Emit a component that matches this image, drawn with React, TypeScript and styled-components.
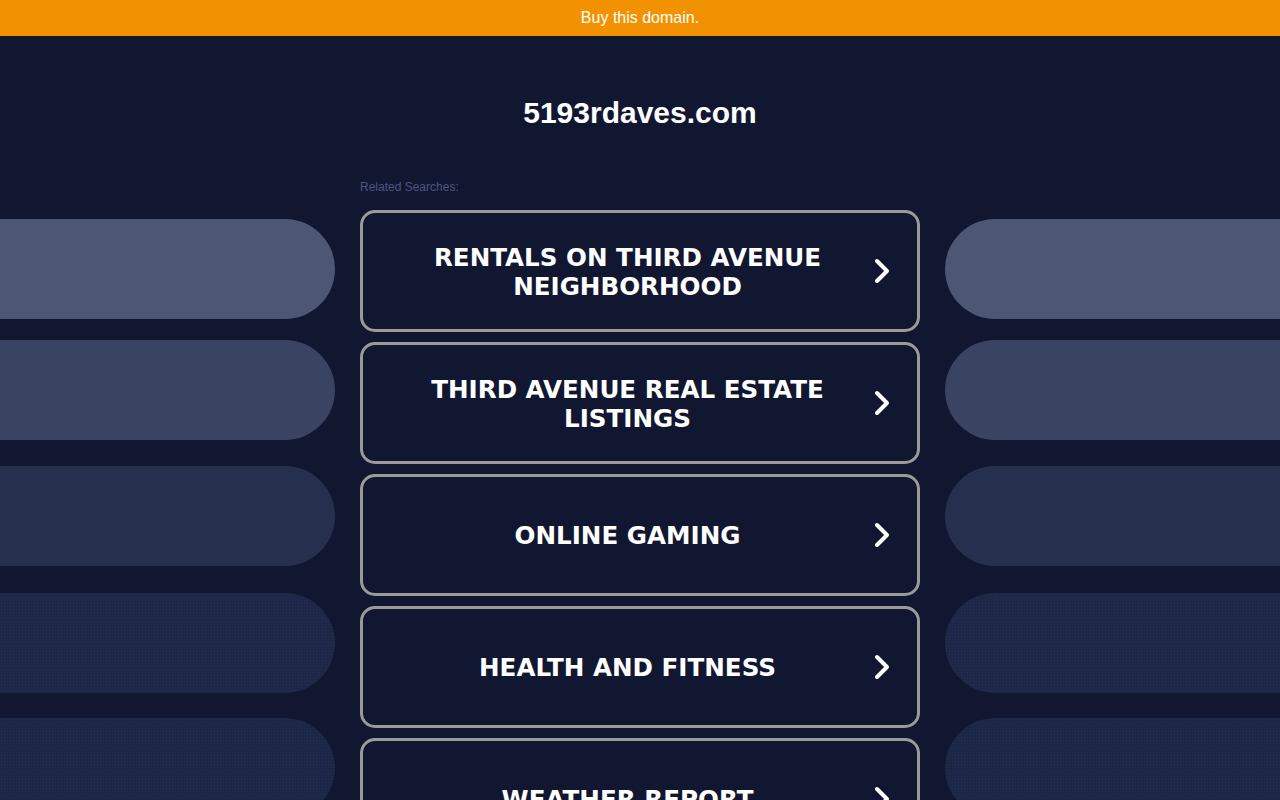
import React from 'react'
import styled, { createGlobalStyle, css } from 'styled-components'

const GlobalStyle = createGlobalStyle`
  html, body {
    margin: 0;
    padding: 0;
    background: #111730;
    overflow: hidden;
  }
  body {
    font-family: 'Liberation Sans', Arial, sans-serif;
  }
`

const searches = [
  'RENTALS ON THIRD AVENUE NEIGHBORHOOD',
  'THIRD AVENUE REAL ESTATE LISTINGS',
  'ONLINE GAMING',
  'HEALTH AND FITNESS',
  'WEATHER REPORT',
]

const pills = [
  { color: '#4d5773', gap: 0, dotted: false },
  { color: '#3a4361', gap: 21, dotted: false },
  { color: '#272f4f', gap: 26, dotted: false },
  { color: '#1e2747', gap: 27, dotted: true },
  { color: '#1c2646', gap: 25, dotted: true },
]

const Chevron = () => (
  <svg width="18" height="28" viewBox="0 0 18 28" fill="none">
    <polyline
      points="4,4 14,14 4,24"
      stroke="#ffffff"
      strokeWidth="4"
      strokeLinecap="round"
      strokeLinejoin="round"
    />
  </svg>
)

const App: React.FC = () => {
  return (
    <>
      <GlobalStyle />
      <TopBar>Buy this domain.</TopBar>
      <Title>5193rdaves.com</Title>
      <Main>
        <PillColumn>
          {pills.map((p, i) => (
            <Pill key={i} $side="left" $color={p.color} $gap={p.gap} $dotted={p.dotted} />
          ))}
        </PillColumn>
        <Center>
          <Label>Related Searches:</Label>
          {searches.map((s) => (
            <Card key={s}>
              <CardText>{s}</CardText>
              <ArrowWrap>
                <Chevron />
              </ArrowWrap>
            </Card>
          ))}
        </Center>
        <PillColumn>
          {pills.map((p, i) => (
            <Pill key={i} $side="right" $color={p.color} $gap={p.gap} $dotted={p.dotted} />
          ))}
        </PillColumn>
      </Main>
    </>
  )
}

const TopBar = styled.div`
  height: 36px;
  background: #f39200;
  color: #ffffff;
  font-size: 16px;
  line-height: 36px;
  text-align: center;
`
const Title = styled.h1`
  margin: 61px 0 0;
  font-size: 30px;
  line-height: 32px;
  font-weight: bold;
  color: #ffffff;
  text-align: center;
`
const Main = styled.div`
  display: grid;
  grid-template-columns: 335px 560px 335px;
  column-gap: 25px;
  margin-top: 51px;
`
const PillColumn = styled.div`
  display: flex;
  flex-direction: column;
  padding-top: 39px;
`
const Pill = styled.div<{ $side: 'left' | 'right'; $color: string; $gap: number; $dotted: boolean }>`
  height: 100px;
  margin-top: ${({ $gap }) => $gap}px;
  background-color: ${({ $color }) => $color};
  border-radius: ${({ $side }) => ($side === 'left' ? '0 50px 50px 0' : '50px 0 0 50px')};
  ${({ $dotted }) =>
    $dotted &&
    css`
      background-image: radial-gradient(rgba(120, 140, 200, 0.08) 0.6px, transparent 0.9px);
      background-size: 3px 3px;
    `}
`
const Center = styled.div`
  display: flex;
  flex-direction: column;
`
const Label = styled.div`
  font-size: 12px;
  line-height: 14px;
  color: #4b5682;
  margin-bottom: 16px;
`
const Card = styled.div`
  box-sizing: border-box;
  height: 122px;
  margin-bottom: 10px;
  border: 3px solid #9a9a9a;
  border-radius: 15px;
  display: flex;
  align-items: center;
  padding: 0 26px 0 35px;
`
const CardText = styled.div`
  flex: 1;
  text-align: center;
  font-family: 'DejaVu Sans', Verdana, sans-serif;
  font-weight: bold;
  font-size: 24.6px;
  line-height: 29px;
  color: #ffffff;
  padding: 1px 16px 0 0;
`
const ArrowWrap = styled.div`
  display: flex;
  align-items: center;
  width: 18px;
`

export default App
